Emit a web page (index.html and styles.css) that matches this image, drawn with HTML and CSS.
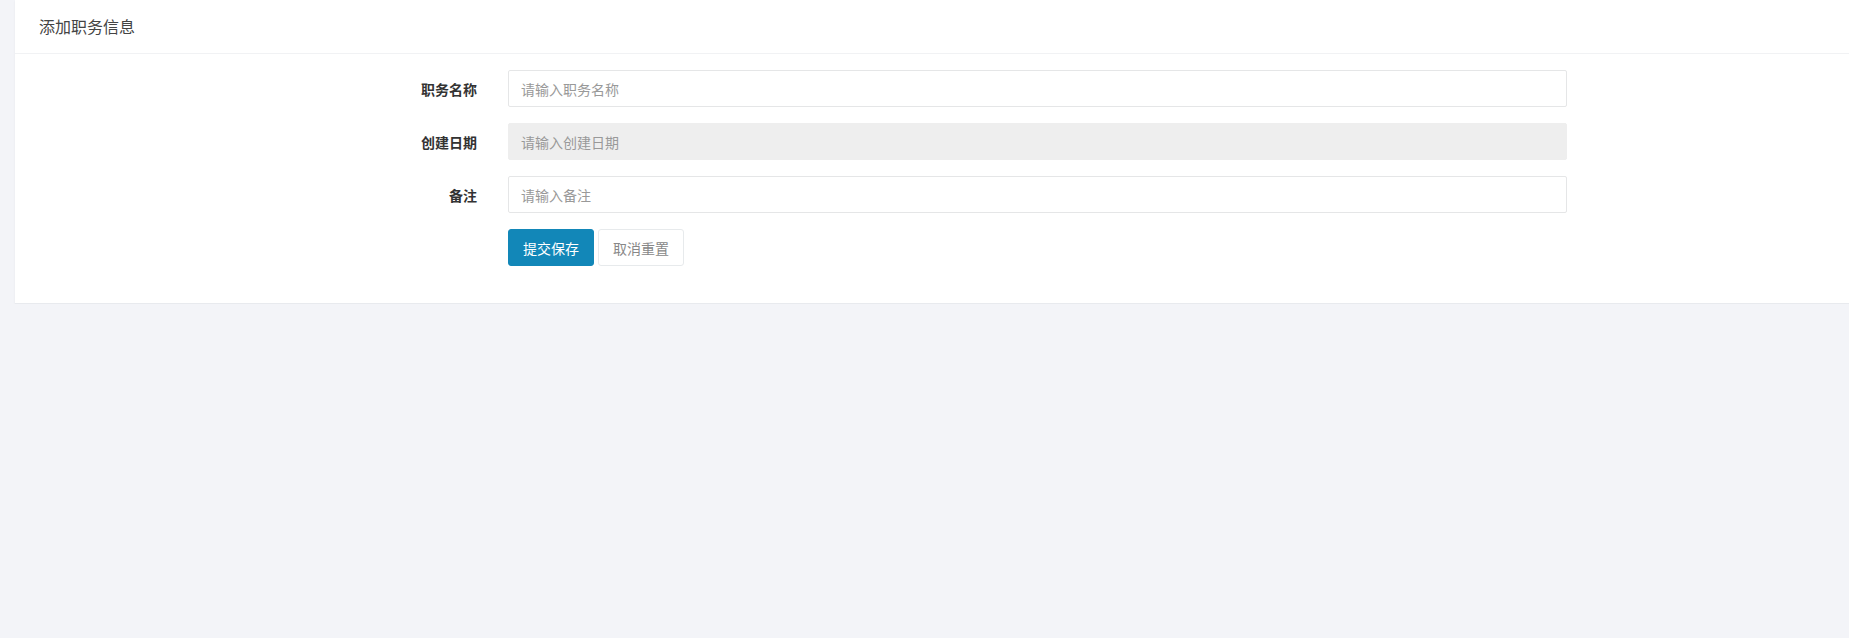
FILE: index.html
```html
<!DOCTYPE html>
<html lang="zh-CN">
<head>
<meta charset="utf-8">
<title>添加职务信息</title>
<link rel="stylesheet" href="styles.css">
</head>
<body>
<div class="page">
  <div class="card">
    <div class="card-head">添加职务信息</div>
    <form class="card-body">
      <div class="row">
        <label class="label">职务名称</label>
        <div class="field"><input class="input" type="text" placeholder="请输入职务名称"></div>
      </div>
      <div class="row">
        <label class="label">创建日期</label>
        <div class="field"><input class="input readonly" type="text" placeholder="请输入创建日期" readonly></div>
      </div>
      <div class="row">
        <label class="label">备注</label>
        <div class="field"><input class="input" type="text" placeholder="请输入备注"></div>
      </div>
      <div class="row">
        <span class="label"></span>
        <div class="field buttons">
          <button type="button" class="btn btn-primary">提交保存</button>
          <button type="button" class="btn btn-white">取消重置</button>
        </div>
      </div>
    </form>
  </div>
</div>
</body>
</html>
```

FILE: styles.css
```css
* { box-sizing: border-box; }
html, body {
  margin: 0;
  padding: 0;
  background: #f3f4f8;
  font-family: "Noto Sans CJK SC", "Noto Sans", sans-serif;
  color: #333;
}
.page {
  padding-left: 15px;
}
.card {
  background: #fff;
  box-shadow: 0 1px 2px rgba(0,0,0,0.06);
  border-bottom: 1px solid #e8eaee;
}
.card-head {
  height: 54px;
  line-height: 53px;
  padding-left: 24px;
  font-size: 16px;
  font-weight: normal;
  color: #444;
  border-bottom: 1px solid #f1f2f4;
}
.card-body {
  padding: 16px 0 37px;
  display: flex;
  flex-direction: column;
  gap: 16px;
  margin: 0;
}
.row {
  display: flex;
  align-items: center;
}
.label {
  width: 462px;
  text-align: right;
  font-size: 14px;
  font-weight: bold;
  color: #333;
}
.field {
  margin-left: 31px;
  width: 1059px;
}
.input {
  display: block;
  width: 100%;
  height: 37px;
  border: 1px solid #e5e6e7;
  border-radius: 2px;
  padding: 0 12px;
  font-family: inherit;
  font-size: 14px;
  color: #333;
  background: #fff;
  outline: none;
}
.input::placeholder { color: #999; }
.input.readonly {
  background: #eeeeee;
  border-color: #eeeeee;
}
.buttons {
  display: flex;
  gap: 4px;
}
.btn {
  height: 37px;
  padding: 0 14px;
  font-family: inherit;
  font-size: 14px;
  border-radius: 3px;
  cursor: pointer;
}
.btn-primary {
  background: #1287b8;
  border: 1px solid #1287b8;
  color: #fff;
}
.btn-white {
  background: #fff;
  border: 1px solid #e7eaec;
  color: #888;
}
```
